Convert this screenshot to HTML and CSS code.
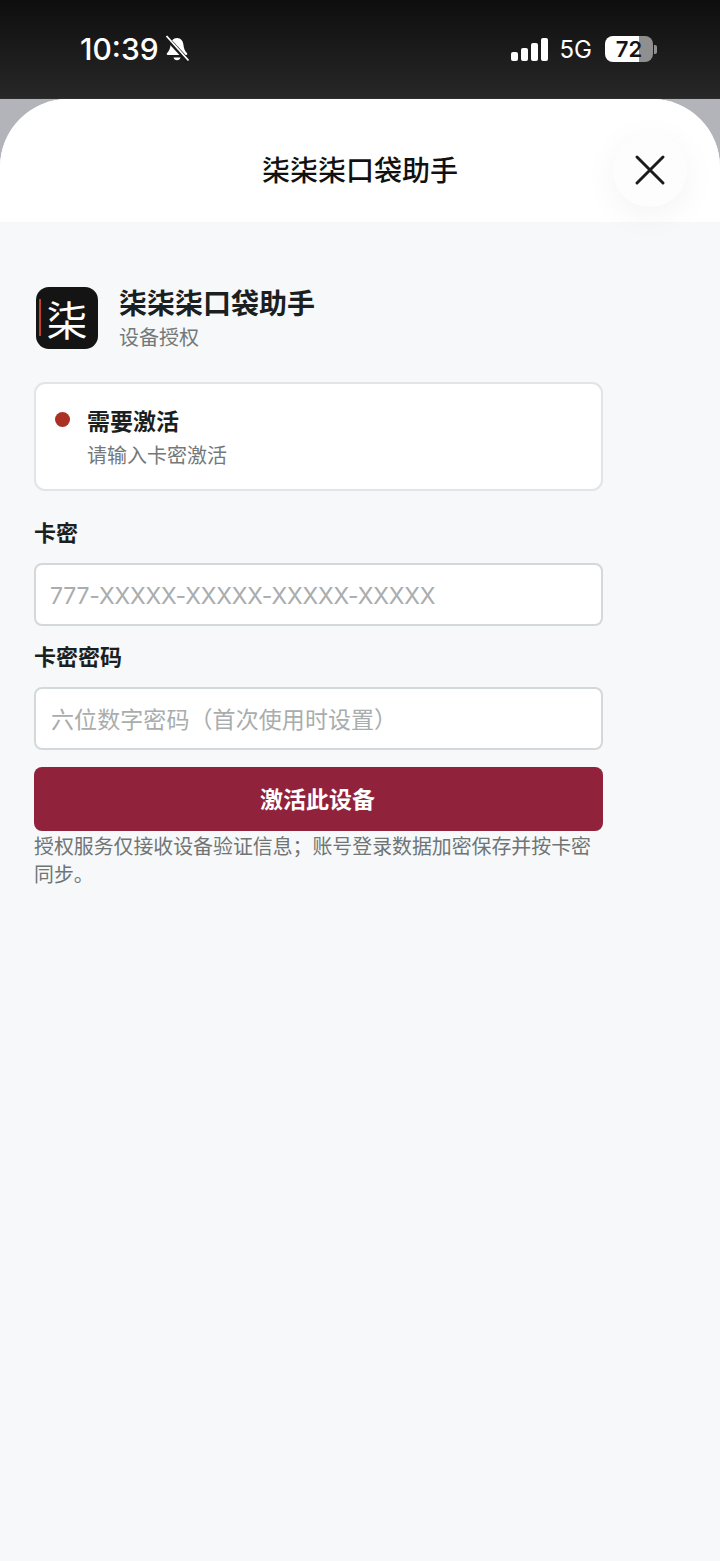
FILE: index.html
```html
<!DOCTYPE html>
<html lang="zh-CN">
<head>
    <meta charset="UTF-8">
    <meta name="viewport" content="width=device-width, initial-scale=1.0">
    <title>柒柒柒口袋助手</title>
    <link rel="stylesheet" href="styles.css">
</head>
<body>

    <header class="status-bar">
        <div class="status-left">
            <span class="clock">10:39</span>
            <svg class="bell" width="26" height="28" viewBox="0 0 26 28">
                <path d="M13 3c-4 0-6 3-6.400 6.500-.4 3.500-1.100 6-3.600 8.800-.6.800-.2 1.700.8 1.700h18.400c1 0 1.400-.9.800-1.700-2.500-2.800-3.200-5.300-3.600-8.800C19 6 17 3 13 3z" fill="#fff"/>
                <path d="M9.500 22.500h7c-.4 1.800-1.800 2.800-3.500 2.800s-3.100-1-3.500-2.800z" fill="#fff"/>
                <path d="M1.500 1.500l23 25" stroke="#1a1a1a" stroke-width="4.500"/>
                <path d="M2.500 1l22 24.500" stroke="#fff" stroke-width="1.800"/>
            </svg>
        </div>
        <div class="status-right">
            <div class="signal">
                <span class="bar bar-1"></span>
                <span class="bar bar-2"></span>
                <span class="bar bar-3"></span>
                <span class="bar bar-4"></span>
            </div>
            <span class="network">5G</span>
            <div class="battery">
                <div class="battery-body"><span class="battery-level">72</span></div>
                <span class="battery-cap"></span>
            </div>
        </div>
    </header>

    <main class="sheet">
        <div class="sheet-head">
            <h1 class="sheet-title">柒柒柒口袋助手</h1>
            <button class="close-btn" type="button" aria-label="关闭">
                <svg width="32" height="32" viewBox="0 0 32 32">
                    <path d="M3 3l26 26M29 3L3 29" stroke="#1b1b1b" stroke-width="3" stroke-linecap="round"/>
                </svg>
            </button>
        </div>

        <section class="content">
            <div class="brand">
                <div class="brand-icon"><span class="brand-line"></span>柒</div>
                <div class="brand-text">
                    <div class="brand-name">柒柒柒口袋助手</div>
                    <div class="brand-sub">设备授权</div>
                </div>
            </div>

            <div class="status-card">
                <span class="dot"></span>
                <div>
                    <div class="status-title">需要激活</div>
                    <div class="status-desc">请输入卡密激活</div>
                </div>
            </div>

            <form class="activate-form">
                <label class="field-label" for="card-key">卡密</label>
                <input class="field-input key-input" id="card-key" type="text" placeholder="777-XXXXX-XXXXX-XXXXX-XXXXX">
                <label class="field-label" for="card-pass">卡密密码</label>
                <input class="field-input pass-input" id="card-pass" type="text" placeholder="六位数字密码（首次使用时设置）">
                <button class="submit-btn" type="button">激活此设备</button>
            </form>

            <p class="note">授权服务仅接收设备验证信息；账号登录数据加密保存并按卡密同步。</p>
        </section>
    </main>

</body>
</html>
```

FILE: styles.css
```css
* {
    box-sizing: border-box;
}

html, body {
    height: 100%;
}

body {
    margin: 0;
    display: flex;
    flex-direction: column;
    background-color: #b3b4ba;
    font-family: "Liberation Sans", "Noto Sans CJK SC", sans-serif;
    overflow: hidden;
}

/* status bar */
.status-bar {
    height: 99px;
    flex: none;
    display: flex;
    justify-content: space-between;
    align-items: center;
    padding: 0 63px 0 80px;
    background: linear-gradient(#0e0e0e, #272727);
    color: #fff;
    border-bottom: 1px solid #2e2e2e;
}

.status-left {
    display: flex;
    align-items: center;
    gap: 5px;
}

.clock {
    font-family: Inter, sans-serif;
    font-size: 30px;
    font-weight: 500;
}

.status-right {
    display: flex;
    align-items: center;
}

.signal {
    display: flex;
    align-items: flex-end;
    gap: 3px;
    height: 24px;
}

.bar {
    width: 7px;
    background-color: #fff;
    border-radius: 2px;
}

.bar-1 { height: 9px; }
.bar-2 { height: 13px; }
.bar-3 { height: 18px; }
.bar-4 { height: 23px; }

.network {
    font-family: Inter, sans-serif;
    font-size: 24px;
    margin-left: 12px;
    margin-right: 13px;
}

.battery {
    display: flex;
    align-items: center;
    gap: 1px;
}

.battery-body {
    width: 48px;
    height: 26px;
    border-radius: 8px;
    background: linear-gradient(90deg, #fff 70%, #8f8f8f 70%);
    display: flex;
    align-items: center;
    justify-content: center;
}

.battery-level {
    color: #141414;
    font-family: Inter, sans-serif;
    font-size: 22px;
    font-weight: 600;
}

.battery-cap {
    width: 3px;
    height: 9px;
    background-color: #8f8f8f;
    border-radius: 0 2px 2px 0;
}

/* sheet */
.sheet {
    flex: 1;
    display: flex;
    flex-direction: column;
    border-radius: 68px 68px 0 0;
    background-color: #f6f8fa;
    overflow: hidden;
}

.sheet-head {
    position: relative;
    height: 123px;
    flex: none;
    display: flex;
    align-items: center;
    justify-content: center;
    padding-top: 16px;
    background-color: #fff;
}

.sheet-title {
    margin: 0;
    font-size: 28px;
    font-weight: 500;
    color: #111;
}

.close-btn {
    position: absolute;
    top: 34px;
    right: 33px;
    width: 74px;
    height: 74px;
    display: flex;
    align-items: center;
    justify-content: center;
    padding: 0;
    border: none;
    border-radius: 50%;
    background-color: #fdfdfd;
    box-shadow: 0 8px 34px rgba(0, 0, 0, 0.05);
}

.content {
    width: 637px;
    padding: 65px 34px 0;
}

.brand {
    height: 62px;
    display: flex;
    align-items: center;
    gap: 21px;
    margin-left: 2px;
}

.brand-text {
    padding-top: 4px;
}

.brand-icon {
    position: relative;
    width: 62px;
    height: 62px;
    display: flex;
    align-items: center;
    justify-content: center;
    border-radius: 13px;
    background-color: #141414;
    color: #fff;
    font-size: 41px;
}

.brand-line {
    position: absolute;
    left: 3px;
    top: 12px;
    width: 2px;
    height: 37px;
    background-color: #c0402f;
}

.brand-name {
    font-size: 28px;
    font-weight: 700;
    line-height: 34px;
    color: #1b1f1f;
}

.brand-sub {
    margin-top: 2px;
    font-size: 20px;
    line-height: 28px;
    color: #737878;
}

.status-card {
    display: flex;
    align-items: flex-start;
    gap: 17px;
    height: 109px;
    margin-top: 33px;
    padding: 21px 19px;
    background-color: #fff;
    border: 2px solid #e2e5e6;
    border-radius: 11px;
}

.dot {
    width: 15px;
    height: 15px;
    margin-top: 7px;
    border-radius: 50%;
    background-color: #aa3024;
}

.status-title {
    font-size: 23px;
    font-weight: 700;
    line-height: 34px;
    color: #1b1f1f;
}

.status-desc {
    font-size: 20px;
    line-height: 34px;
    color: #737878;
}

.activate-form {
    display: flex;
    flex-direction: column;
}

.field-label {
    height: 72px;
    padding-top: 27px;
    font-size: 22px;
    font-weight: 700;
    line-height: 32px;
    color: #1b1f1f;
}

.field-input + .field-label {
    height: 61px;
    padding-top: 16px;
}

.field-input {
    height: 63px;
    padding: 2px 14px 0;
    font-family: Inter, "Noto Sans CJK SC", sans-serif;
    font-size: 23px;
    color: #1b1f1f;
    background-color: #fff;
    border: 2px solid #d3d9da;
    border-radius: 8px;
    outline: none;
}

.key-input {
    letter-spacing: -0.2px;
}

.pass-input {
    padding-left: 15px;
    letter-spacing: 0.08px;
}

.field-input::placeholder {
    color: #a9adad;
    opacity: 1;
}

.submit-btn {
    height: 64px;
    margin-top: 17px;
    padding: 0 2px 3px 0;
    font-family: inherit;
    font-size: 23px;
    font-weight: 700;
    color: #fff;
    background-color: #91223b;
    border: none;
    border-radius: 8px;
}

.note {
    margin: 2px 0 0;
    font-size: 19.9px;
    line-height: 28px;
    color: #6f7575;
}
```
